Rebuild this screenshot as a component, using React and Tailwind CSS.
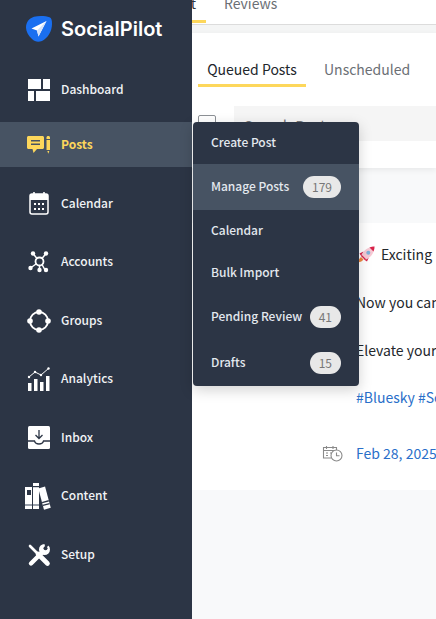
// Sidebar icons, hand drawn to follow the reference
const DashboardIcon = () => (
  <svg width="24" height="24" viewBox="0 0 24 24" fill="#fff">
    <rect x="1" y="1" width="13" height="10" />
    <rect x="16" y="1" width="7" height="10" />
    <rect x="1" y="13" width="6" height="10" />
    <rect x="9" y="13" width="14" height="10" />
  </svg>
);

const PostsIcon = () => (
  <svg width="24" height="18" viewBox="0 0 24 18" fill="#fdd75b">
    <path d="M0 1.500C0 .7.700 0 1.500 0h14c.8 0 1.500.7 1.500 1.500v10c0 .8-.7 1.500-1.500 1.500H10l-3.500 4-1-4h-4C.7 13 0 12.300 0 11.500z" />
    <rect x="4" y="4" width="9" height="1.500" fill="#475363" />
    <rect x="4" y="7.500" width="9" height="1.500" fill="#475363" />
    <path d="M19.500 1.500c0-.8.600-1.500 1.750-1.500S23 .7 23 1.500V3h-3.500z" />
    <path d="M19.500 4H23v10h-3.500z" />
    <path d="M20.300 15h2l-1 2.800z" />
  </svg>
);

const CalendarIcon = () => (
  <svg width="20" height="23" viewBox="0 0 20 23" fill="none">
    <path d="M5 0v4M15 0v4" stroke="#fff" strokeWidth="1.600" />
    <rect x="1" y="2" width="18" height="20" rx="2" stroke="#fff" strokeWidth="1.500" />
    <path d="M1 3.500C1 2.700 1.700 2 2.500 2h15c.8 0 1.500.7 1.500 1.500V8H1z" fill="#fff" />
    <g fill="#fff">
      <rect x="5" y="11" width="2" height="2" />
      <rect x="9" y="11" width="2" height="2" />
      <rect x="13" y="11" width="2" height="2" />
      <rect x="5" y="16" width="2" height="2" />
      <rect x="9" y="16" width="2" height="2" />
      <rect x="13" y="16" width="2" height="2" />
    </g>
  </svg>
);

const AccountsIcon = () => (
  <svg width="22" height="22" viewBox="0 0 22 22" fill="none" stroke="#fff">
    <circle cx="11.500" cy="10.500" r="4" strokeWidth="1.800" />
    <path d="M5 2.500l4 5M18 2.500l-4 5M2.500 17l5.500-4M11.500 19v-5M17 19l-3-5.500" strokeWidth="1.500" />
    <g fill="#fff" stroke="none">
      <circle cx="5" cy="2.500" r="2.200" />
      <circle cx="18" cy="2.500" r="2.200" />
      <circle cx="2.500" cy="17" r="2.200" />
      <circle cx="11.500" cy="19" r="2.200" />
      <circle cx="18" cy="19" r="2.200" />
    </g>
  </svg>
);

const GroupsIcon = () => (
  <svg width="24" height="24" viewBox="0 0 24 24" fill="none" stroke="#fff">
    <circle cx="12" cy="12" r="9" strokeWidth="1.800" />
    <g fill="#fff" stroke="none">
      <circle cx="12" cy="3" r="2.800" />
      <circle cx="12" cy="21" r="2.800" />
      <circle cx="3" cy="12" r="2.800" />
      <circle cx="21" cy="12" r="2.800" />
    </g>
  </svg>
);

const AnalyticsIcon = () => (
  <svg width="24" height="24" viewBox="0 0 24 24" fill="#fff">
    <rect x="1" y="16" width="3.500" height="8" />
    <rect x="7" y="12" width="3.500" height="12" />
    <rect x="13" y="15" width="3.500" height="9" />
    <rect x="19" y="9" width="3.500" height="15" />
    <path d="M2 10l6-5 6 3 8-7" fill="none" stroke="#fff" strokeWidth="1" />
    <circle cx="2" cy="10" r="1.200" />
    <circle cx="8" cy="5" r="1.200" />
    <circle cx="14" cy="8" r="1.200" />
    <circle cx="21.500" cy="1.500" r="1.200" />
  </svg>
);

const InboxIcon = () => (
  <svg width="22" height="23" viewBox="0 0 22 23">
    <rect x="0" y="0" width="22" height="23" rx="1.500" fill="#fff" />
    <path d="M11 4v8M7.500 9l3.500 3.500L14.500 9" fill="none" stroke="#2c3545" strokeWidth="1.300" />
    <path d="M0 15h6.500c.5 2 2 3 4.500 3s4-1 4.500-3H22" fill="none" stroke="#2c3545" strokeWidth="1.300" />
  </svg>
);

const ContentIcon = () => (
  <svg width="28" height="28" viewBox="0 0 28 28">
    <rect x="0" y="5" width="7" height="22" fill="#fff" />
    <rect x="2" y="8" width="4" height="5" fill="#2c3545" />
    <rect x="0" y="22" width="7" height="2" fill="#9aa1ab" />
    <rect x="8" y="1" width="6" height="26" fill="#fff" />
    <rect x="8" y="4" width="6" height="1.200" fill="#2c3545" />
    <rect x="8" y="22" width="6" height="2" fill="#9aa1ab" />
    <g transform="rotate(-15 20 16)">
      <rect x="16" y="5" width="7" height="22" fill="#fff" />
      <rect x="16" y="19" width="7" height="1.300" fill="#2c3545" />
      <rect x="16" y="22" width="7" height="1.300" fill="#2c3545" />
    </g>
  </svg>
);

const SetupIcon = () => (
  <svg width="24" height="24" viewBox="0 0 24 24" fill="none" stroke="#fff" strokeLinecap="round">
    <path d="M3 3l8 8" strokeWidth="2.600" />
    <path d="M11 11l9.500 9.500" strokeWidth="4.600" />
    <path d="M4 20.500L15 9.500" strokeWidth="4.400" />
    <circle cx="17.500" cy="6.500" r="5.500" fill="#fff" stroke="none" />
    <path d="M18.500 5.500L23.500 .5 17 -1z" fill="#2c3545" stroke="none" />
    <circle cx="18.500" cy="5.200" r="2" fill="#2c3545" stroke="none" />
  </svg>
);

const navItems = [
  { label: "Dashboard", icon: <DashboardIcon />, mb: "mb-[10px]" },
  { label: "Posts", icon: <PostsIcon />, active: true, mb: "mb-[14px]" },
  { label: "Calendar", icon: <CalendarIcon />, mb: "mb-[13px]" },
  { label: "Accounts", icon: <AccountsIcon />, mb: "mb-[14px]" },
  { label: "Groups", icon: <GroupsIcon />, mb: "mb-[13px]" },
  { label: "Analytics", icon: <AnalyticsIcon />, mb: "mb-[14px]" },
  { label: "Inbox", icon: <InboxIcon />, mb: "mb-[13px]" },
  { label: "Content", icon: <ContentIcon />, mb: "mb-[14px]" },
  { label: "Setup", icon: <SetupIcon />, mb: "" },
];

const subItems = [
  { label: "Create Post", h: "h-[42px]" },
  { label: "Manage Posts", count: 179, h: "h-[46px]", active: true },
  { label: "Calendar", h: "h-[42px]" },
  { label: "Bulk Import", h: "h-[42px]" },
  { label: "Pending Review", count: 41, h: "h-[46px]" },
  { label: "Drafts", count: 15, h: "h-[46px]" },
];

const Sidebar = () => (
  <div className="w-[192px] h-full shrink-0 bg-[#2c3545] flex flex-col">
    <div className="h-[67px] pl-[26px] pb-[9px] flex items-center gap-[9px]">
      <svg width="26" height="26" viewBox="0 0 26 26">
        <path d="M8 .8C13 -.5 20 0 23.500 1.200 25.500 2 26 4 26 8c0 7-4 14-10 17-4 1.500-7 .8-10-2C2 19.500 0 15 0 11.500 0 6 3.500 2.200 8 .8z" fill="#1a6ff0" />
        <path d="M20.500 5L5.500 12.500l5.500 2 1.500 6z" fill="#fff" />
        <path d="M20.500 5L11 14.500l1.500 6z" fill="#d5e3fa" />
      </svg>
      <span className="font-['Inter',sans-serif] font-semibold text-[20px] text-white">SocialPilot</span>
    </div>
    {navItems.map((item) => (
      <div
        key={item.label}
        className={`h-[45px] shrink-0 flex items-center ${item.mb} ${item.active ? "bg-[#475363]" : ""}`}
      >
        <div className="w-[61px] flex justify-center pl-[16px]">{item.icon}</div>
        <span className={`text-[12px] pb-[2px] ${item.active ? "text-[#fdd75b] font-bold" : "text-[#f1f3f5] font-medium"}`}>
          {item.label}
        </span>
      </div>
    ))}
  </div>
);

const SubMenu = () => (
  <div className="absolute left-[193px] top-[122px] w-[166px] rounded-[4px] bg-[#2c3545] overflow-hidden shadow-[0_4px_14px_rgba(0,0,0,0.18)]">
    {subItems.map((item) => (
      <div
        key={item.label}
        className={`${item.h} pl-[18px] pr-[18px] flex items-center justify-between ${item.active ? "bg-[#475363]" : ""}`}
      >
        <span className="text-[12px] pb-[2px] font-medium text-[#e3e8ee] whitespace-nowrap">{item.label}</span>
        {item.count && (
          <span className="min-w-[31px] h-[22px] px-[9px] rounded-full bg-[#e8e8e8] text-[#777] text-[12px] flex items-center justify-center">
            {item.count}
          </span>
        )}
      </div>
    ))}
  </div>
);

const RocketEmoji = () => (
  <svg width="17" height="17" viewBox="0 0 17 17" className="shrink-0">
    <path d="M3 11c-1.500 1-2.500 3-3 5.500 2.500-.5 4.500-1.500 5.500-3z" fill="#f0883e" />
    <path d="M5.500 5.500L1.500 7.500l2 3zM11 11l-2 4.500-3-2z" fill="#d8234a" />
    <path d="M3 10C5 4.500 10 .8 16.500.5 16.500 7 12.500 12 7 14z" fill="#f7c9d4" />
    <path d="M11.500 1.500c1.500-.6 3.400-1 5-1 0 1.700-.3 3.400-1 5z" fill="#d8234a" />
    <path d="M3 10l4 4 1.300-.6-4.700-4.700z" fill="#d8234a" />
    <circle cx="10.300" cy="6.700" r="2" fill="#7fb2d9" />
  </svg>
);

const ScheduleIcon = () => (
  <svg width="21" height="17" viewBox="0 0 21 17" fill="none" stroke="#8a8a8a" strokeWidth="1.100" className="shrink-0">
    <path d="M9 13H1.500V2.500h13V6" />
    <path d="M1.500 5.500h13M4.500 1v3M11 1v3" />
    <path d="M4 8h2M8 8h2M4 10.500h2" />
    <circle cx="14.500" cy="10.500" r="5.500" fill="#fff" />
    <path d="M14.500 7.500v3.300h3" />
  </svg>
);

const MainArea = () => (
  <div className="flex-1 min-w-0 h-full flex flex-col bg-[#f8f9fa] overflow-hidden whitespace-nowrap">
    <div className="h-[25px] shrink-0 bg-white border-b border-[#dcdcdc] flex">
      <div className="w-[14px] h-[23px] border-b-[3px] border-[#fdd75b] relative overflow-hidden">
        <span className="absolute right-[10px] top-[-7px] text-[14px] text-[#33373d]">t</span>
      </div>
      <span className="ml-[18px] mt-[-7px] text-[14px] text-[#6b6f75]">Reviews</span>
    </div>
    <div className="h-[8px] shrink-0 bg-[#f4f5f5]" />
    <div className="h-[135px] shrink-0 bg-white shadow-[0_2px_6px_rgba(0,0,0,0.07)] pl-[6px]">
      <div className="flex pt-[26px]">
        <div className="w-[108px] h-[28px] border-b-[3px] border-[#fdd75b] text-center text-[14px] text-[#22262b]">
          Queued Posts
        </div>
        <span className="ml-[18px] text-[14px] text-[#6b6f75]">Unscheduled</span>
      </div>
      <div className="flex items-start mt-[19px]">
        <div className="w-[18px] h-[18px] mt-[9px] rounded-[2px] border border-[#8d9196] bg-white" />
        <div className="ml-[18px] flex-1 h-[35px] bg-[#f5f5f5] pl-[10px] pt-[9px] text-[15px] text-[#777]">
          Search Posts
        </div>
      </div>
    </div>
    <div className="h-[55px] shrink-0" />
    <div className="h-[267px] shrink-0 bg-white pl-[130px] pt-[21px] text-[14px] leading-[20px] text-[#23272c]">
      <div className="h-[20px] pl-[36px] flex items-center gap-[6px]">
        <RocketEmoji />
        <span>Exciting News: Bluesky is here</span>
      </div>
      <div className="mt-[28px] pl-[34px]">Now you can schedule posts</div>
      <div className="mt-[28px] pl-[34px]">Elevate your social media</div>
      <div className="mt-[27px] pl-[34px] text-[#2a6fc9]">#Bluesky #SocialMedia</div>
      <div className="mt-[36px] flex items-center gap-[13px]">
        <ScheduleIcon />
        <span className="text-[#2a6fc9]">Feb 28, 2025</span>
      </div>
    </div>
  </div>
);

export default function App() {
  return (
    <div className="relative w-[436px] h-[619px] overflow-hidden flex font-['Noto_Sans_CJK_SC','Noto_Sans',sans-serif]">
      <Sidebar />
      <MainArea />
      <SubMenu />
    </div>
  );
}
